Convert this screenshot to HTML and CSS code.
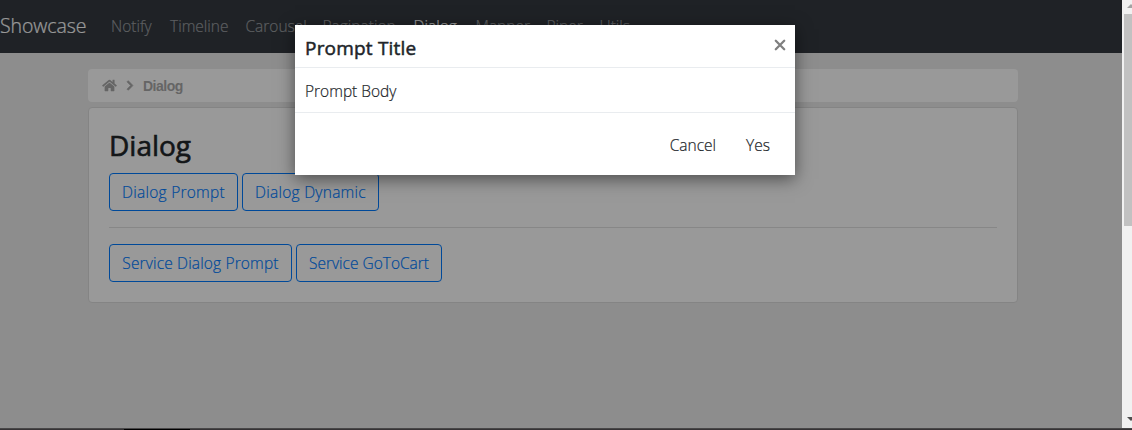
FILE: index.html
```html
<!DOCTYPE html>
<html lang="en">
<head>
<meta charset="utf-8">
<title>Showcase</title>
<link rel="stylesheet" href="styles.css">
</head>
<body>
<div class="window">
  <div class="viewport">
    <nav class="navbar">
      <a class="brand">Showcase</a>
      <a class="link notify">Notify</a>
      <a class="link timeline">Timeline</a>
      <a class="link carousel">Carousel</a>
      <a class="link pagination">Pagination</a>
      <a class="link dialog active">Dialog</a>
      <a class="link manner">Manner</a>
      <a class="link piper">Piper</a>
      <a class="link utils">Utils</a>
    </nav>
    <main class="container">
      <div class="breadcrumb">
        <svg class="home" viewBox="0 0 576 512"><path d="M280 148 96 300v164a16 16 0 0 0 16 16h112a16 16 0 0 0 16-16v-96a16 16 0 0 1 16-16h64a16 16 0 0 1 16 16v96a16 16 0 0 0 16 16h112a16 16 0 0 0 16-16V300L296 148a12 12 0 0 0-16 0zM572 251l-84-69V44a12 12 0 0 0-12-12h-56a12 12 0 0 0-12 12v72l-90-74a48 48 0 0 0-61 0L4 251a12 12 0 0 0-1 17l25 31a12 12 0 0 0 17 2l235-194a12 12 0 0 1 16 0l235 194a12 12 0 0 0 17-2l25-31a12 12 0 0 0-1-17z"/></svg>
        <svg class="chevron" viewBox="0 0 320 512"><path d="M285 273 91 467c-9 9-25 9-34 0l-22-22c-10-10-10-25 0-34l154-155L35 101c-10-9-10-24 0-34l22-22c9-9 25-9 34 0l194 194c10 10 10 25 0 34z"/></svg>
        <span>Dialog</span>
      </div>
      <section class="card">
        <h1>Dialog</h1>
        <div class="buttons">
          <button class="btn b-prompt">Dialog Prompt</button>
          <button class="btn b-dynamic">Dialog Dynamic</button>
        </div>
        <hr>
        <div class="buttons">
          <button class="btn b-service">Service Dialog Prompt</button>
          <button class="btn b-cart">Service GoToCart</button>
        </div>
      </section>
    </main>
    <div class="backdrop">
      <div class="modal">
        <header class="modal-header">
          <h2>Prompt Title</h2>
          <svg class="close" viewBox="0 0 12 12"><path d="M1.8 1.8l8.4 8.4M10.2 1.8l-8.4 8.4"/></svg>
        </header>
        <div class="modal-body">Prompt Body</div>
        <footer class="modal-footer"><span class="cancel">Cancel</span><span class="yes">Yes</span></footer>
      </div>
    </div>
  </div>
  <div class="scrollbar">
    <svg class="arrow" viewBox="0 0 8 4"><path d="M0 4 4 0l4 4z"/></svg>
    <div class="thumb"></div>
    <svg class="arrow down" viewBox="0 0 8 4"><path d="M0 0h8L4 4z"/></svg>
  </div>
</div>
<div class="taskbar"><div class="task"></div></div>
</body>
</html>
```

FILE: styles.css
```css
* { box-sizing: border-box; }
body {
  margin: 0;
  height: 430px;
  overflow: hidden;
  font-family: "Open Sans", "Noto Sans", sans-serif;
  font-size: 15.5px;
  font-weight: 300;
  line-height: 24px;
  letter-spacing: 0;
  -webkit-text-stroke: 0.2px;
  color: #212529;
}
.window { display: flex; height: 428px; }
.viewport { position: relative; width: 1122px; background: #ebebeb; overflow: hidden; }
.navbar { display: flex; align-items: center; height: 53px; padding-bottom: 2px; background: #343a40; white-space: nowrap; }
.brand { width: 111px; font-size: 19.5px; letter-spacing: -0.1px; color: #fff; }
.link { color: #9a9da0; }
.notify { width: 59px; }
.timeline { width: 75.5px; }
.carousel { width: 77px; }
.pagination { width: 91px; }
.dialog { width: 62px; }
.manner { width: 71px; }
.piper { width: 53px; }
.link.active { color: #fff; }
.container { width: 930px; margin: 16px 0 0 88px; }
.breadcrumb {
  display: flex;
  align-items: center;
  height: 33px;
  padding-left: 14px;
  border-radius: 4px;
  background: #fff;
  color: #a9a9a9;
  font: bold 14px "Liberation Sans", sans-serif;
  letter-spacing: -0.5px;
  -webkit-text-stroke: 0;
}
.breadcrumb svg { fill: #a9a9a9; }
.home { width: 15px; height: 13px; }
.chevron { width: 8px; height: 11px; margin: 0 9px 0 9px; stroke: #a9a9a9; stroke-width: 30; }
.card {
  height: 196px;
  margin-top: 5px;
  padding: 20px;
  border: 1px solid #dcdcdc;
  border-radius: 4px;
  background: #fff;
}
h1 { margin: -1px 0 9px; font-size: 28px; line-height: 37px; font-weight: 400; letter-spacing: 0; -webkit-text-stroke: 0.6px; }
.buttons { display: flex; gap: 4px; }
.btn {
  height: 38px;
  padding: 0;
  border: 1px solid #007bff;
  border-radius: 4px;
  background: transparent;
  color: #007bff;
  font: 300 15.5px/24px "Open Sans", sans-serif;
  letter-spacing: 0.15px;
  white-space: nowrap;
}
.b-prompt { width: 129px; letter-spacing: 0.25px; }
.b-dynamic { width: 137px; letter-spacing: 0.25px; }
.b-service { width: 183px; }
.b-cart { width: 146px; letter-spacing: 0; }
hr { margin: 16px 0; border: 0; border-top: 1px solid #e2e2e2; }
.backdrop {
  position: absolute;
  inset: 0;
  padding: 25px 0 0 295px;
  background: rgba(0, 0, 0, 0.4);
}
.modal { width: 500px; height: 150px; background: #fff; box-shadow: 0 4px 16px rgba(0, 0, 0, 0.5); }
.modal-header {
  display: flex;
  align-items: center;
  justify-content: space-between;
  height: 43px;
  padding: 3px 9px 0 10px;
  border-bottom: 1px solid #e9ecef;
}
h2 { margin: 0; font-size: 19px; line-height: 30px; font-weight: 400; letter-spacing: 0.2px; -webkit-text-stroke: 0.5px; }
.close { width: 12px; height: 12px; margin-bottom: 5px; fill: none; stroke: #7f7f7f; stroke-width: 2.3; stroke-linecap: round; }
.modal-body { height: 45px; padding: 11px 10px; border-bottom: 1px solid #e9ecef; }
.modal-footer { display: flex; justify-content: flex-end; gap: 30px; padding: 20px 25px 0; }
.scrollbar { display: flex; flex-direction: column; width: 10px; background: #f1f1f1; overflow: hidden; }
.arrow { flex: none; width: 8px; height: 4px; margin: 4px 0 6px 5px; fill: #a3a3a3; }
.thumb { height: 212px; margin-left: 2px; background: #c1c1c1; }
.arrow.down { margin: auto 0 7px 5px; fill: #505050; }
.taskbar { height: 2px; border-top: 1px solid #484748; background: #363335; }
.task { width: 66px; height: 1px; margin-left: 124px; background: #000; }
```
